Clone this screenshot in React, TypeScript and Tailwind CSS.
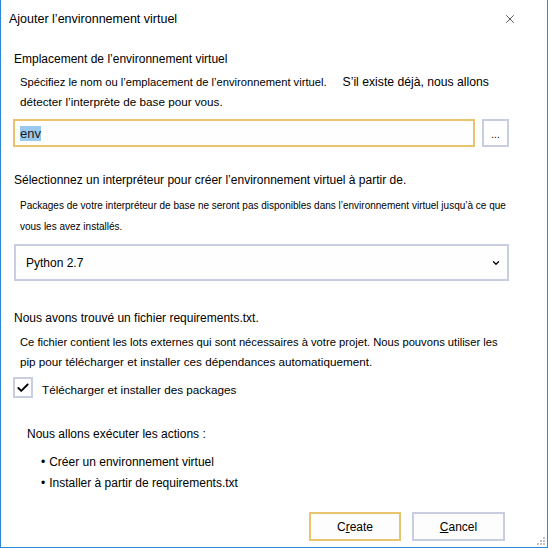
import { ChevronDown, X, Check } from 'lucide-react';

const font = { fontFamily: '"Liberation Sans", Arial, sans-serif' };

function Heading({ children }: { children: React.ReactNode }) {
  return <div className="pl-[13px] text-[12px] leading-[19px] text-black">{children}</div>;
}

export default function App() {
  return (
    <div
      className="relative flex h-[548px] w-[548px] flex-col border-x border-b border-[#2b88d8] bg-white text-black"
      style={font}
    >
      {/* title bar */}
      <div className="flex h-[38px] shrink-0 items-center justify-between pl-[8px] pr-[30px]">
        <span className="text-[12.5px]">Ajouter l’environnement virtuel</span>
        <X className="h-[14px] w-[14px] text-[#222]" strokeWidth={1.3} />
      </div>

      <div className="mt-[12px]">
        <Heading>Emplacement de l’environnement virtuel</Heading>
      </div>
      <div className="mt-[4px] pl-[19px] text-[11.7px] leading-[19px] whitespace-nowrap">
        <div className="flex h-[19px] items-baseline">
          <span className="text-[11.2px] leading-[19px]">
            Spécifiez le nom ou l’emplacement de l’environnement virtuel.
          </span>
          <span className="ml-[16px] text-[12.2px] leading-[19px]">S’il existe déjà, nous allons</span>
        </div>
        <div>détecter l’interprète de base pour vous.</div>
      </div>

      <div className="mt-[8px] flex items-center gap-[7px] pl-[12px]">
        <div className="flex h-[28px] w-[462px] items-center border-2 border-[#e9c46c] bg-[#fefefe] pl-[5px]">
          <span className="bg-[#99c9ef] text-[13px] leading-[15px] text-[#1a1a1a]">env</span>
        </div>
        <div className="flex h-[28px] w-[27px] items-center justify-center border-2 border-[#c8cde0] bg-white pt-[4px] text-[10px] leading-none">
          ...
        </div>
      </div>

      <div className="mt-[24px]">
        <Heading>Sélectionnez un interpréteur pour créer l’environnement virtuel à partir de.</Heading>
      </div>
      <div className="mt-[5px] pl-[19px] text-[10px] leading-[21px] whitespace-nowrap">
        <div>
          Packages de votre interpréteur de base ne seront pas disponibles dans l’environnement virtuel
          jusqu’à ce que
        </div>
        <div>vous les avez installés.</div>
      </div>

      <div className="ml-[13px] mt-[7px] flex h-[37px] w-[495px] items-center justify-between border-2 border-[#c8cde0] bg-[#fefefe] pl-[10px] pr-[6px]">
        <span className="text-[12px]">Python 2.7</span>
        <ChevronDown className="h-[10px] w-[10px]" strokeWidth={3} />
      </div>

      <div className="mt-[28px]">
        <Heading>Nous avons trouvé un fichier requirements.txt.</Heading>
      </div>
      <div className="mt-[5px] pl-[19px] leading-[19px] whitespace-nowrap">
        <div className="text-[11.2px]">
          Ce fichier contient les lots externes qui sont nécessaires à votre projet. Nous pouvons utiliser les
        </div>
        <div className="text-[11.7px]">pip pour télécharger et installer ces dépendances automatiquement.</div>
      </div>

      <div className="mt-[6px] flex items-center pl-[12px]">
        <div className="flex h-[21px] w-[20px] items-center justify-center border-2 border-[#c8cde0] bg-white">
          <Check className="h-[14px] w-[14px]" strokeWidth={3.2} />
        </div>
        <span className="ml-[9px] mt-[4px] text-[11.7px]">Télécharger et installer des packages</span>
      </div>

      <div className="mt-[26px] pl-[26px] text-[12px]">Nous allons exécuter les actions :</div>
      <ul className="mt-[10px] flex flex-col gap-[3px] pl-[40px] text-[12px] leading-[18px]">
        <li className="flex gap-[4px]">
          <span>•</span>
          <span>Créer un environnement virtuel</span>
        </li>
        <li className="flex gap-[4px]">
          <span>•</span>
          <span>Installer à partir de requirements.txt</span>
        </li>
      </ul>

      <div className="mt-auto mb-[6px] flex justify-end gap-[11px] pr-[42px]">
        <button className="h-[29px] w-[92px] border-2 border-[#e9c46c] bg-[#fdfdfd] text-[12px]">
          C<span className="underline">r</span>eate
        </button>
        <button className="h-[29px] w-[93px] border-2 border-[#c8cde0] bg-[#fdfdfd] text-[12px]">
          <span className="underline">C</span>ancel
        </button>
      </div>

      {/* resize grip */}
      <div className="absolute right-[2px] bottom-[2px] grid grid-cols-3 gap-[1px] opacity-60">
        <span />
        <span />
        <span className="h-[2px] w-[2px] bg-[#999]" />
        <span />
        <span className="h-[2px] w-[2px] bg-[#999]" />
        <span className="h-[2px] w-[2px] bg-[#999]" />
        <span className="h-[2px] w-[2px] bg-[#999]" />
        <span className="h-[2px] w-[2px] bg-[#999]" />
        <span className="h-[2px] w-[2px] bg-[#999]" />
      </div>
    </div>
  );
}
